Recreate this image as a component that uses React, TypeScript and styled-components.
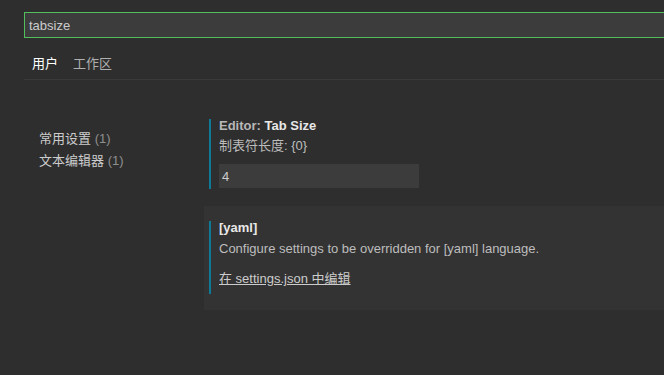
import React from "react";
import styled, { createGlobalStyle } from "styled-components";

const GlobalStyle = createGlobalStyle`
  html, body {
    margin: 0;
    padding: 0;
    background: #2e2e2e;
    overflow: hidden;
  }
  body {
    font-family: "Liberation Sans", "Noto Sans CJK SC", sans-serif;
    font-size: 13px;
    color: #cccccc;
  }
`;

const Page = styled.div`
  width: 664px;
  height: 375px;
  padding-left: 24px;
  box-sizing: border-box;
`;

const Header = styled.div`
  padding-top: 12px;
`;

const SearchBox = styled.div`
  height: 26px;
  box-sizing: border-box;
  border: 1px solid #52be5c;
  border-right: none;
  background: #3c3c3c;
  padding-left: 4px;
  display: flex;
  align-items: center;
  color: #cccccc;
  font-size: 13px;
`;

const TabBar = styled.div`
  display: flex;
  gap: 15px;
  padding: 16px 0 5px 8px;
  border-bottom: 1px solid #3a3a3a;
`;

const Tab = styled.div<{ $active?: boolean }>`
  line-height: 20px;
  font-size: 13px;
  color: ${(p) => (p.$active ? "#ffffff" : "#b0b0b0")};
`;

const Body = styled.div`
  display: flex;
  padding-top: 39px;
`;

const Toc = styled.div`
  width: 180px;
  flex-shrink: 0;
  box-sizing: border-box;
  padding: 9px 0 0 15px;
`;

const TocItem = styled.div`
  line-height: 22px;
  color: #cccccc;
`;

const Count = styled.span`
  color: #8e8e8e;
`;

const Settings = styled.div`
  flex: 1;
  display: flex;
  flex-direction: column;
  gap: 17px;
`;

const SettingWrap = styled.div<{ $panel?: boolean }>`
  padding: ${(p) => (p.$panel ? "15px 0 16px 5px" : "0 0 0 5px")};
  background: ${(p) => (p.$panel ? "#333333" : "transparent")};
`;

const SettingItem = styled.div<{ $bottom: number }>`
  border-left: 2px solid #0f7a98;
  padding: 0 0 ${(p) => p.$bottom}px 8px;
`;

const Title = styled.div`
  line-height: 14px;
  font-weight: 700;
  color: #e8e8e8;
`;

const Category = styled.span`
  color: #b8b8b8;
`;

const Description = styled.div<{ $top: number }>`
  line-height: 18px;
  margin-top: ${(p) => p.$top}px;
  color: #bdbdbd;
`;

const ValueInput = styled.div`
  margin-top: 9px;
  width: 200px;
  height: 24px;
  box-sizing: border-box;
  background: #3c3c3c;
  padding-left: 3px;
  display: flex;
  align-items: center;
  color: #cccccc;
`;

const EditLink = styled.a`
  display: block;
  margin-top: 12px;
  line-height: 18px;
  color: #cccccc;
  text-decoration: underline;
  cursor: pointer;
`;

export default function App() {
  return (
    <Page>
      <GlobalStyle />
      <Header>
        <SearchBox>tabsize</SearchBox>
        <TabBar>
          <Tab $active>用户</Tab>
          <Tab>工作区</Tab>
        </TabBar>
      </Header>
      <Body>
        <Toc>
          <TocItem>
            常用设置 <Count>(1)</Count>
          </TocItem>
          <TocItem>
            文本编辑器 <Count>(1)</Count>
          </TocItem>
        </Toc>
        <Settings>
          <SettingWrap>
            <SettingItem $bottom={1}>
              <Title>
                <Category>Editor: </Category>Tab Size
              </Title>
              <Description $top={4}>制表符长度: {"{0}"}</Description>
              <ValueInput>4</ValueInput>
            </SettingItem>
          </SettingWrap>
          <SettingWrap $panel>
            <SettingItem $bottom={6}>
              <Title>[yaml]</Title>
              <Description $top={5}>
                Configure settings to be overridden for [yaml] language.
              </Description>
              <EditLink>在 settings.json 中编辑</EditLink>
            </SettingItem>
          </SettingWrap>
        </Settings>
      </Body>
    </Page>
  );
}
